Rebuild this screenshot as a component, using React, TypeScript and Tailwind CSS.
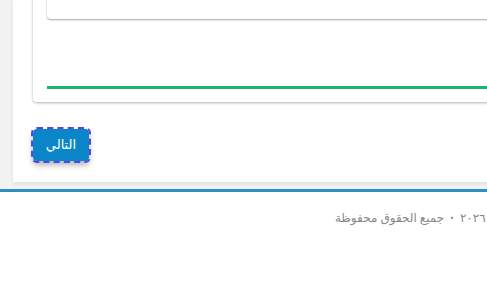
import React from 'react';

// Bottom of a wizard step: card with progress line, "next" button and footer
export default function App() {
  return (
    <div
      className="w-[487px] h-[291px] overflow-hidden bg-white"
      style={{ fontFamily: '"Noto Sans", "DejaVu Sans", sans-serif' }}
    >
      <div dir="rtl" className="w-[560px]">
        {/* Main area */}
        <div className="bg-[#f2f2f2] pl-[13px] pb-[7px]">
          <div className="h-[182px] overflow-hidden bg-white pl-[20px] shadow-[0_2px_4px_rgba(0,0,0,0.08)]">
            {/* Step card */}
            <div className="-mt-[40px] rounded-b-[4px] bg-white px-[14px] pt-[14px] pb-[13px] shadow-[0_1px_3px_rgba(0,0,0,0.3)]">
              <div className="h-[45px] rounded-[4px] bg-white shadow-[0_1px_2px_rgba(0,0,0,0.35)]" />
              <div className="mt-[67px] h-[3px] bg-[#1db46c]" />
            </div>

            {/* Actions */}
            <div className="mt-[27px] flex justify-end">
              <button className="h-[32px] w-[56px] rounded-[4px] bg-[#0a86c8] text-[13px] text-white outline-2 outline-dashed outline-offset-0 outline-[#5642e8] shadow-[0_4px_6px_rgba(0,0,0,0.3)]">
                التالي
              </button>
            </div>
          </div>
        </div>

        {/* Footer */}
        <footer className="border-t-[3px] border-[#2a8fc3] bg-white pt-[17px] pr-[58px]">
          <div className="flex items-center gap-[6px] text-[12px] tracking-[0.3px] text-[#888]">
            <span>©</span>
            <span>٢٠٢٦</span>
            <span className="text-[9px]">•</span>
            <span>جميع الحقوق محفوظة</span>
          </div>
        </footer>
      </div>
    </div>
  );
}
